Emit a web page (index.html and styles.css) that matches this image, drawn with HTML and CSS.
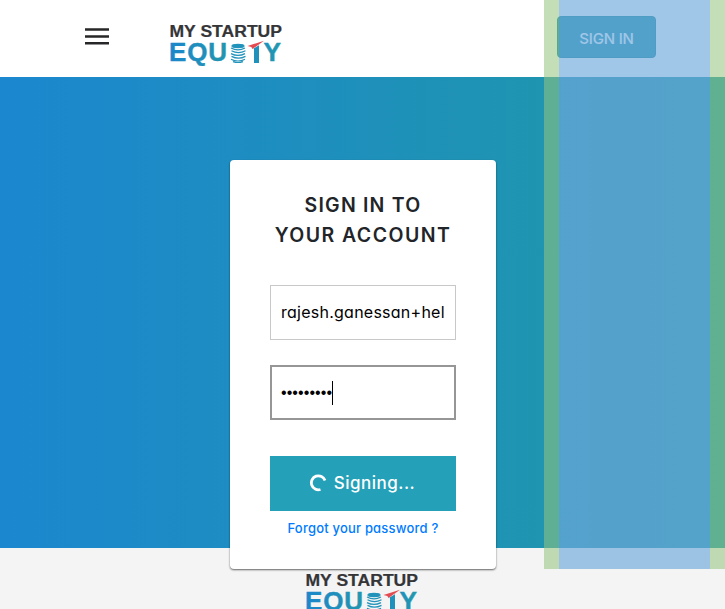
FILE: index.html
```html
<!DOCTYPE html>
<html lang="en">
<head>
<meta charset="utf-8">
<title>My Startup Equity</title>
<link rel="stylesheet" href="styles.css">
</head>
<body>
<svg class="defs" width="0" height="0" aria-hidden="true">
  <defs>
    <linearGradient id="brand" gradientUnits="userSpaceOnUse" x1="0" y1="0" x2="112" y2="0">
      <stop offset="0" stop-color="#1b87cb"/><stop offset=".5" stop-color="#2296ae"/><stop offset=".75" stop-color="#1b8cc4"/><stop offset="1" stop-color="#229aab"/>
    </linearGradient>
    <symbol id="logo" viewBox="0 0 112 42">
      <text class="logo-top" x="-0.500" y="12.700" textLength="112.500" lengthAdjust="spacingAndGlyphs">MY STARTUP</text>
      <text class="logo-bottom" x="-1" y="37.400" textLength="58" lengthAdjust="spacing">EQU</text>
      <g class="coins">
        <ellipse cx="68" cy="22" rx="6" ry="1.600"/>
        <path d="M61 24q7 3.600 14 0M61.500 26.800q7 3.600 14 0M61 29.600q7 3.600 14 0M61.500 32.400q7 3.600 14 0M61 35.200q7 3.600 14 0M63 37.600q5 1.800 10 0"/>
      </g>
      <path class="stem" d="M83.500 24.500l5.500-3.300V39H84V25.500z"/>
      <path class="arrow" d="M77.500 22L94 16.700l-11.500 8.300-1.200-2z"/>
      <text class="logo-bottom" x="93.500" y="37.400" textLength="17.500" lengthAdjust="spacingAndGlyphs">Y</text>
    </symbol>
  </defs>
</svg>
<header class="topbar">
  <button class="menu" aria-label="Menu"><svg viewBox="0 0 24 18"><path d="M0 1.500h24M0 8.500h24M0 15.300h24"/></svg></button>
  <svg class="logo" role="img" aria-label="My Startup Equity"><use href="#logo"/></svg>
  <button class="signin">SIGN IN</button>
</header>
<main class="hero">
  <form class="card">
    <h1><span class="line1">SIGN IN TO</span><br><span class="line2">YOUR ACCOUNT</span></h1>
    <div class="field"><span class="email">rajesh.ganessan+hel</span></div>
    <div class="field focused"><span class="dots">•••••••••</span><span class="caret"></span></div>
    <div class="submit">
      <svg class="spinner" viewBox="0 0 18 18"><path d="M16 6.500A7 7 0 1 0 11.500 15.500"/></svg>
      <span>Signing...</span>
    </div>
    <a class="forgot">Forgot your password ?</a>
  </form>
</main>
<footer><svg class="logo" role="img" aria-label="My Startup Equity"><use href="#logo"/></svg></footer>
<div class="inspector"></div>
</body>
</html>
```
FILE: styles.css
```css
* { box-sizing: border-box; }
body { margin: 0; height: 609px; overflow: hidden; background: #f4f4f4; font-family: Inter, "Open Sans", sans-serif; font-feature-settings: "cv11"; color: #212529; }
button { border: 0; font: inherit; }
.defs { position: absolute; }
.topbar { height: 77px; background: #fff; display: flex; align-items: flex-start; padding-left: 85px; }
.menu { width: 24px; height: 18px; margin-top: 28px; padding: 0; background: none; }
.menu svg { display: block; width: 24px; height: 18px; stroke: #272729; stroke-width: 2.500; }
.logo { width: 112px; height: 42px; display: block; }
.topbar .logo { margin: 24px 0 0 61px; }
.logo-top { font: bold 15.800px "Liberation Sans", sans-serif; fill: #353537; stroke: #353537; stroke-width: .2px; }
.logo-bottom { font: bold 26px "Liberation Sans", sans-serif; fill: url(#brand); stroke: url(#brand); stroke-width: .4px; }
.coins { fill: none; stroke: #2293bb; stroke-width: 1.200; }
.coins ellipse { fill: #2293bb; }
.stem { fill: #1f91bb; }
.arrow { fill: #e34b50; }
.signin { width: 99px; height: 42px; margin: 16px 0 0 275px; padding: 2px 0 0; border: 1px solid #138496; border-radius: 4px; background: #1d94aa; color: #fff; font-size: 15px; font-weight: 500; letter-spacing: -.2px; white-space: nowrap; }
.hero { height: 471px; padding-top: 83px; background: linear-gradient(90deg, #1b87cf, #2199a7); }
.card { position: relative; z-index: 1; width: 266px; height: 409px; margin-left: 230px; padding: 30px 40px 0; background: #fff; border-radius: 4px; box-shadow: 0 1px 2px rgba(0,0,0,.6); text-align: center; }
h1 { margin: 0 -10px; height: 60px; font-size: 19.500px; line-height: 30px; font-weight: 600; white-space: nowrap; }
.line1 { letter-spacing: 1.200px; }
.line2 { letter-spacing: 1.450px; }
.field { height: 55px; border: 1px solid #c8c8c8; margin-top: 35px; padding: 0 10px 1px; display: flex; align-items: center; color: #000; font-size: 16px; white-space: nowrap; overflow: hidden; }
.email { letter-spacing: .25px; }
.field.focused { margin-top: 25px; padding: 0 9px; border: 2px solid #969696; }
.dots { font: 16px "Liberation Sans", sans-serif; letter-spacing: .08px; }
.caret { width: 1px; height: 24px; background: #000; }
.submit { height: 55px; margin-top: 36px; padding: 0 2px 1px 0; background: #24a1b8; color: #fff; display: flex; align-items: center; justify-content: center; gap: 7px; font-size: 17px; font-weight: 500; letter-spacing: .5px; }
.spinner { width: 18px; height: 18px; fill: none; stroke: #fff; stroke-width: 2.800; }
.forgot { display: block; margin: 7px -10px 0; color: #007bff; font-size: 13px; line-height: 20px; font-weight: 500; letter-spacing: .2px; white-space: nowrap; }
footer { height: 61px; padding: 25px 0 0 306px; overflow: hidden; }
.inspector { position: absolute; z-index: 2; left: 544px; top: 0; width: 181px; height: 569px; border: solid rgba(147,196,125,.55); border-width: 0 15px; background: rgba(111,168,220,.66) padding-box; }
```
